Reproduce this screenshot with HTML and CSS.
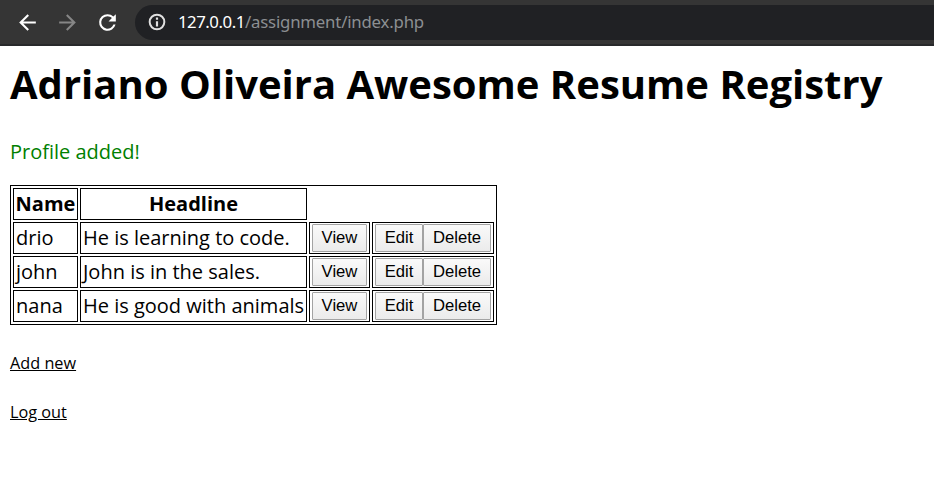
FILE: index.html
```html
<!DOCTYPE html>
<html lang="en">
<head>
<meta charset="utf-8">
<title>Resume Registry</title>
<link rel="stylesheet" href="styles.css">
</head>
<body>
<header class="toolbar">
  <svg class="icon back" viewBox="0 0 24 24"><path d="M20 11H7.83l5.59-5.59L12 4l-8 8 8 8 1.41-1.41L7.83 13H20z"/></svg>
  <svg class="icon forward" viewBox="0 0 24 24"><path d="M12 4l-1.41 1.41L16.17 11H4v2h12.17l-5.58 5.59L12 20l8-8z"/></svg>
  <svg class="icon reload" viewBox="0 0 24 24"><path d="M17.65 6.35A7.96 7.96 0 0 0 12 4a8 8 0 1 0 7.73 10h-2.08A6 6 0 1 1 12 6c1.66 0 3.14.69 4.22 1.78L13 11h7V4z"/></svg>
  <div class="address">
    <svg class="info" viewBox="0 0 24 24"><path d="M10.7 6.7h2.6v2.6h-2.6zm0 4.3h2.6v6.3h-2.6zM12 2a10 10 0 1 0 0 20 10 10 0 0 0 0-20zm0 17.6a7.6 7.6 0 1 1 0-15.2 7.6 7.6 0 0 1 0 15.2z"/></svg>
    <span class="url"><span class="host">127.0.0.1</span><span class="path">/assignment/index.php</span></span>
  </div>
</header>
<main class="page">
  <h1>Adriano Oliveira Awesome Resume Registry</h1>
  <p class="message">Profile added!</p>
  <table class="profiles">
    <colgroup><col class="name"><col class="headline"><col class="view"><col class="edit"></colgroup>
    <tr><th>Name</th><th>Headline</th></tr>
    <tr><td>drio</td><td>He is learning to code.</td><td><button>View</button></td><td><div class="actions"><button>Edit</button><button>Delete</button></div></td></tr>
    <tr><td>john</td><td>John is in the sales.</td><td><button>View</button></td><td><div class="actions"><button>Edit</button><button>Delete</button></div></td></tr>
    <tr><td>nana</td><td>He is good with animals</td><td><button>View</button></td><td><div class="actions"><button>Edit</button><button>Delete</button></div></td></tr>
  </table>
  <p class="link"><a href="#">Add new</a></p>
  <p class="link"><a href="#">Log out</a></p>
</main>
</body>
</html>
```
FILE: styles.css
```css
body { margin: 0; background: #fff; color: #000; font-family: "Open Sans", sans-serif; overflow: hidden; }
.toolbar { display: flex; align-items: center; height: 46px; box-sizing: border-box; padding-left: 15px; background: #353535; border-bottom: 2px solid #28292b; }
.icon { width: 25px; height: 25px; margin-right: 15px; fill: #fff; flex: none; }
.forward { fill: #868686; }
.address { display: flex; align-items: center; flex: 1; height: 35px; margin-right: -30px; padding-left: 12px; background: #202124; border-radius: 18px; }
.info { width: 20px; height: 20px; margin-right: 11px; fill: #e0e0e0; }
.url { display: flex; font: 16.8px/24px "Noto Sans", sans-serif; color: #8c8f92; }
.host { width: 67px; color: #fff; letter-spacing: -0.48px; }
.path { letter-spacing: -0.2px; }
.page { padding: 0 10px; }
h1 { margin: 10px 0 0; font-size: 40px; line-height: 56px; white-space: nowrap; }
.message { margin: 25px 0 0; font-size: 20px; line-height: 30px; color: #008000; }
.profiles { width: 487px; height: 140px; margin: 18px 0 0; border: 1px solid #000; border-spacing: 2px; table-layout: fixed; font-size: 20px; line-height: 28px; }
.profiles th, .profiles td { border: 1px solid #000; padding: 1px; height: 28px; white-space: nowrap; }
.profiles td { padding-left: 2px; }
.name { width: 65px; }
.headline { width: 227px; }
.view { width: 61px; }
.edit { width: 122px; }
.actions { display: flex; }
button { display: block; box-sizing: border-box; width: 55px; height: 28px; padding: 0; border: 1px solid #a3a3a3; border-radius: 1px; background: linear-gradient(#fafafa, #ebebeb); color: #000; font: 16.67px "Liberation Sans", sans-serif; }
.actions button { width: 48px; }
.actions button + button { width: 68px; }
.link { margin: 22px 0 0; font-size: 16.25px; line-height: 27px; }
.profiles + .link { margin-top: 25px; }
.link a { color: #000; }
```
